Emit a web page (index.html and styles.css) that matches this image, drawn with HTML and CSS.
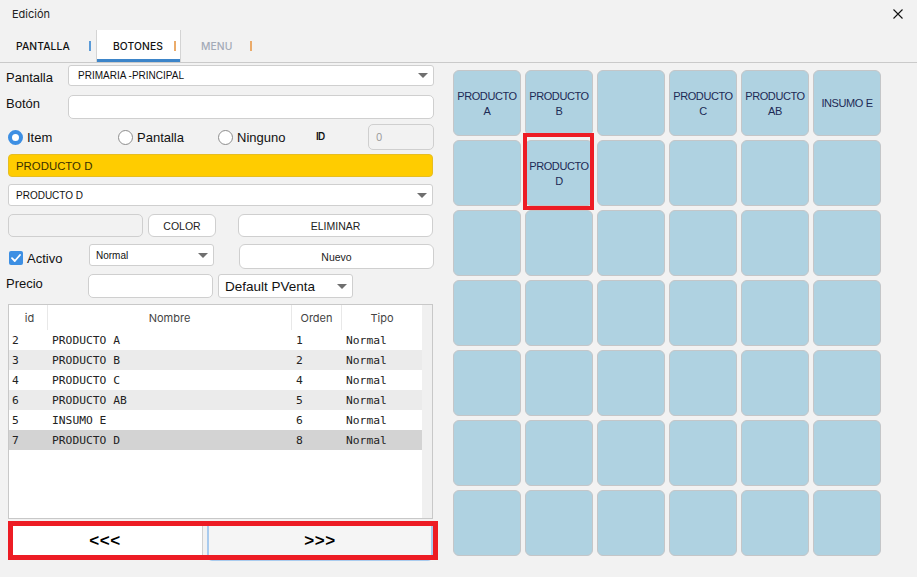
FILE: index.html
```html
<!DOCTYPE html>
<html lang="es">
<head>
<meta charset="utf-8">
<title>Edición</title>
<link rel="stylesheet" href="styles.css">
</head>
<body>
<div class="window">
  <div class="titlebar">
    <span class="title">Edición</span>
    <svg class="close" width="10" height="10" viewBox="0 0 10 10"><path d="M0.5 0.5 L9.5 9.5 M9.5 0.5 L0.5 9.5" stroke="#111" stroke-width="1.1" fill="none"/></svg>
  </div>
  <div class="tabs">
    <div class="tab tab1"><span class="tab-text">PANTALLA</span><span class="sep sep-blue"></span></div>
    <div class="tab tab2 active"><span class="tab-text">BOTONES</span><span class="sep sep-orange"></span></div>
    <div class="tab tab3"><span class="tab-text muted">MENU</span><span class="sep sep-orange"></span></div>
  </div>
  <div class="main">
    <div class="left">
      <div class="row r1">
        <span class="lbl">Pantalla</span>
        <div class="select sel-wide"><span class="sel-text">PRIMARIA -PRINCIPAL</span><span class="caret"></span></div>
      </div>
      <div class="row r2">
        <span class="lbl">Botón</span>
        <div class="input inp-wide"></div>
      </div>
      <div class="row r3">
        <div class="radio-item ri1"><span class="radio on"></span><span class="rlbl">Item</span></div>
        <div class="radio-item ri2"><span class="radio"></span><span class="rlbl">Pantalla</span></div>
        <div class="radio-item ri3"><span class="radio"></span><span class="rlbl">Ninguno</span></div>
        <span class="id-lbl">ID</span>
        <div class="input id-inp"><span class="id-val">0</span></div>
      </div>
      <div class="row r4">
        <div class="yellow">PRODUCTO D</div>
      </div>
      <div class="row r5">
        <div class="select sel-full"><span class="sel-text">PRODUCTO D</span><span class="caret"></span></div>
      </div>
      <div class="row r6">
        <div class="input color-box"></div>
        <div class="btn btn-color">COLOR</div>
        <div class="btn btn-elim">ELIMINAR</div>
      </div>
      <div class="row r7">
        <div class="check-item">
          <span class="check"><svg width="14" height="14" viewBox="0 0 14 14"><path d="M3 7.2 L5.8 10 L11 4" stroke="#fff" stroke-width="1.8" fill="none" stroke-linecap="round" stroke-linejoin="round"/></svg></span>
          <span class="rlbl">Activo</span>
        </div>
        <div class="select sel-normal"><span class="sel-text">Normal</span><span class="caret"></span></div>
        <div class="btn btn-nuevo">Nuevo</div>
      </div>
      <div class="row r8">
        <span class="lbl lbl-precio">Precio</span>
        <div class="input inp-precio"></div>
        <div class="select sel-pventa"><span class="sel-text big">Default PVenta</span><span class="caret"></span></div>
      </div>
      <div class="table">
        <div class="tbl-main">
          <div class="trow thead">
            <span class="th">id</span><span class="th">Nombre</span><span class="th">Orden</span><span class="th">Tipo</span>
          </div>
          <div class="trow"><span>2</span><span>PRODUCTO A</span><span>1</span><span>Normal</span></div>
          <div class="trow alt"><span>3</span><span>PRODUCTO B</span><span>2</span><span>Normal</span></div>
          <div class="trow"><span>4</span><span>PRODUCTO C</span><span>4</span><span>Normal</span></div>
          <div class="trow alt"><span>6</span><span>PRODUCTO AB</span><span>5</span><span>Normal</span></div>
          <div class="trow"><span>5</span><span>INSUMO E</span><span>6</span><span>Normal</span></div>
          <div class="trow sel"><span>7</span><span>PRODUCTO D</span><span>8</span><span>Normal</span></div>
        </div>
        <div class="tbl-scroll"></div>
      </div>
      <div class="pager">
        <div class="pbtn prev">&lt;&lt;&lt;</div>
        <div class="pbtn next">&gt;&gt;&gt;</div>
        <div class="red-frame pager-frame"></div>
      </div>
    </div>
    <div class="grid">
      <div class="cell">PRODUCTO<br>A</div>
      <div class="cell">PRODUCTO<br>B</div>
      <div class="cell"></div>
      <div class="cell">PRODUCTO<br>C</div>
      <div class="cell">PRODUCTO<br>AB</div>
      <div class="cell">INSUMO E</div>

      <div class="cell"></div>
      <div class="cell">PRODUCTO<br>D</div>
      <div class="cell"></div>
      <div class="cell"></div>
      <div class="cell"></div>
      <div class="cell"></div>

      <div class="cell"></div><div class="cell"></div><div class="cell"></div><div class="cell"></div><div class="cell"></div><div class="cell"></div>
      <div class="cell"></div><div class="cell"></div><div class="cell"></div><div class="cell"></div><div class="cell"></div><div class="cell"></div>
      <div class="cell"></div><div class="cell"></div><div class="cell"></div><div class="cell"></div><div class="cell"></div><div class="cell"></div>
      <div class="cell"></div><div class="cell"></div><div class="cell"></div><div class="cell"></div><div class="cell"></div><div class="cell"></div>
      <div class="cell"></div><div class="cell"></div><div class="cell"></div><div class="cell"></div><div class="cell"></div><div class="cell"></div>
      <div class="red-frame cell-frame"></div>
    </div>
  </div>
</div>
</body>
</html>
```
FILE: styles.css
```css
* { box-sizing: border-box; }
html, body { margin: 0; padding: 0; }
body {
  background: #f2f2f2;
  font-family: "Liberation Sans", Arial, sans-serif;
  color: #111;
  width: 917px;
  height: 577px;
  overflow: hidden;
}
.window { width: 917px; height: 577px; }

.titlebar {
  height: 30px;
  display: flex;
  align-items: center;
  justify-content: space-between;
  padding: 0 14px 2px 12px;
}
.title { font-family: "Inter", sans-serif; font-size: 11px; color: #222; }
.close { display: block; }

.tabs {
  height: 33px;
  display: flex;
  border-bottom: 1px solid #cacaca;
}
.tab {
  display: flex;
  align-items: center;
  font-family: "Inter", sans-serif;
  font-size: 10.3px;
  font-weight: 500;
  color: #111;
  letter-spacing: 0.1px;
}
.tab-text { flex: none; }
.muted { color: #a3aab7; }
.sep { width: 2px; height: 10px; margin-left: auto; flex: none; }
.sep-blue { background: #5b9bd8; }
.sep-orange { background: #ebab6a; }
.tab1 { width: 96px; padding-left: 16px; padding-right: 5px; }
.tab2 {
  width: 85px;
  padding-left: 16px;
  padding-right: 4px;
  background: #fff;
  border-left: 1px solid #d4d4d4;
  border-right: 1px solid #d4d4d4;
  box-shadow: inset 0 -3px 0 #3d85c9;
}
.tab3 { width: 75px; padding-left: 20px; padding-right: 4px; }

.main { display: flex; }
.left { width: 440px; padding-left: 8px; flex: none; }

.row { display: flex; align-items: center; width: 426px; }
.lbl { width: 62px; margin-left: -2px; font-size: 13px; color: #111; flex: none; }
.r1 .lbl { margin-top: 4px; }

.select {
  position: relative;
  background: #fff;
  border: 1px solid #cfcfcf;
  border-radius: 3px;
  display: flex;
  align-items: center;
  padding-left: 9px;
  flex: none;
}
.sel-text { font-size: 10px; color: #111; }
.sel-text.big { font-size: 13.5px; }
.caret {
  margin-left: auto;
  margin-right: 5px;
  width: 0; height: 0;
  border-left: 5px solid transparent;
  border-right: 5px solid transparent;
  border-top: 5px solid #6f6f6f;
}
.input {
  background: #fff;
  border: 1px solid #cfcfcf;
  border-radius: 5px;
  flex: none;
}

.r1 { margin-top: 2px; height: 21px; }
.sel-wide { width: 366px; height: 21px; }
.r2 { margin-top: 9px; height: 23px; }
.r2 .lbl { margin-top: -6px; }
.inp-wide { width: 366px; height: 24px; }

.r3 { margin-top: 6px; height: 26px; }
.radio-item { display: flex; align-items: center; flex: none; }
.ri1 { width: 110px; }
.ri2 { width: 100px; }
.ri3 { width: 98px; }
.radio {
  width: 15px; height: 15px;
  border-radius: 50%;
  border: 1px solid #8d8d8d;
  background: #fff;
  flex: none;
  margin-right: 4px;
}
.radio.on {
  border: 4.5px solid #3d8fe3;
  background: #fff;
}
.rlbl { font-size: 13px; color: #111; }
.id-lbl {
  width: 52px; flex: none;
  font-family: "Inter", sans-serif;
  font-size: 10px; font-weight: 600;
  letter-spacing: -0.8px;
  color: #111;
  margin-top: -2px;
}
.id-inp {
  width: 66px; height: 26px;
  background: #f2f2f2;
  display: flex; align-items: center;
  padding-left: 7px;
}
.id-val { font-family: "Inter", sans-serif; font-size: 10px; color: #9a9a9a; }

.r4 { margin-top: 4px; height: 23px; }
.yellow {
  width: 425px; height: 23px;
  background: #ffcc00;
  border: 1px solid #e6bd22;
  border-radius: 4px;
  display: flex; align-items: center;
  padding-left: 7px;
  font-size: 11.4px;
  color: #3a3000;
}
.r5 { margin-top: 7px; height: 22px; }
.sel-full { width: 425px; height: 22px; padding-left: 7px; }

.r6 { margin-top: 8px; height: 23px; }
.color-box { width: 135px; height: 23px; background: #f2f2f2; }
.btn {
  background: #fff;
  border: 1px solid #cfcfcf;
  border-radius: 6px;
  display: flex; align-items: center; justify-content: center;
  font-size: 10.5px;
  color: #222;
  flex: none;
}
.btn-color { width: 68px; height: 23px; margin-left: 5px; }
.btn-elim { width: 195px; height: 23px; margin-left: 22px; }

.r7 { margin-top: 7px; height: 25px; align-items: flex-start; }
.check-item { width: 80px; display: flex; align-items: center; flex: none; margin-top: 5px; margin-left: 1px; }
.check {
  width: 14px; height: 14px;
  background: #3d8fe3;
  border-radius: 2px;
  margin-right: 4px;
  display: block;
}
.check svg { display: block; }
.check-item .rlbl { margin-top: 2px; }
.sel-normal { width: 125px; height: 22px; padding-left: 6px; }
.btn-nuevo { width: 195px; height: 25px; margin-left: 25px; }

.r8 { margin-top: 5px; height: 24px; }
.lbl-precio { width: 82px; margin-top: -5px; }
.inp-precio { width: 125px; height: 24px; }
.sel-pventa { width: 135px; height: 24px; margin-left: 5px; padding-left: 6px; }

.table {
  margin-top: 6px;
  width: 425px;
  height: 215px;
  background: #fff;
  border: 1px solid #c8c8c8;
  display: flex;
}
.tbl-main { width: 413px; flex: none; }
.tbl-scroll { flex: 1; background: #f0f0f0; }
.trow {
  display: grid;
  grid-template-columns: 39px 244px 50px 80px;
  height: 20px;
  align-items: center;
  font-family: "DejaVu Sans Mono", monospace;
  font-size: 11.3px;
  color: #222;
}
.trow > span { padding-left: 4px; white-space: nowrap; }
.trow > span:first-child { padding-left: 3px; }
.trow.alt { background: #ebebeb; }
.trow.sel { background: #d3d3d3; }
.thead { height: 25px; background: #fff; align-items: stretch; }
.th {
  font-family: "Inter", sans-serif;
  font-size: 11px;
  color: #444;
  text-align: center;
  display: flex; align-items: center; justify-content: center;
  border-right: 1px solid #e8e8e8;
}
.thead > .th { padding-left: 0; }
.thead > .th:last-child { border-right: none; }

.pager {
  position: relative;
  margin-top: 2px;
  width: 426px;
  height: 40px;
  display: flex;
  gap: 4px;
}
.pbtn {
  display: flex; align-items: center; justify-content: center;
  font-size: 17px; font-weight: bold; letter-spacing: 0.5px;
  color: #000;
  flex: none;
}
.prev {
  width: 195px; height: 39px;
  background: #fff;
  border-right: 1px solid #d0d0d0;
  border-top-right-radius: 4px;
}
.next {
  width: 226px; height: 40px;
  background: #f5f5f5;
  border: 2px solid #a9cbee;
  border-radius: 5px;
}
.red-frame {
  position: absolute;
  border: 5px solid #ed1c24;
  pointer-events: none;
}
.pager-frame { left: 0; top: 0; width: 430px; height: 39px; }

.grid {
  position: relative;
  margin-left: 13px;
  margin-top: 7px;
  display: grid;
  grid-template-columns: repeat(6, 68px);
  grid-auto-rows: 66px;
  gap: 4px;
  align-content: start;
}
.cell {
  background: #afd2e1;
  border: 1px solid #c4c6c8;
  border-radius: 6px;
  display: flex; align-items: center; justify-content: center;
  text-align: center;
  font-size: 11px;
  letter-spacing: -0.4px;
  line-height: 15px;
  padding-top: 1px;
  color: #1d2a55;
}
.cell-frame { left: 70px; top: 63px; width: 71px; height: 77px; border-width: 4px; }
```
